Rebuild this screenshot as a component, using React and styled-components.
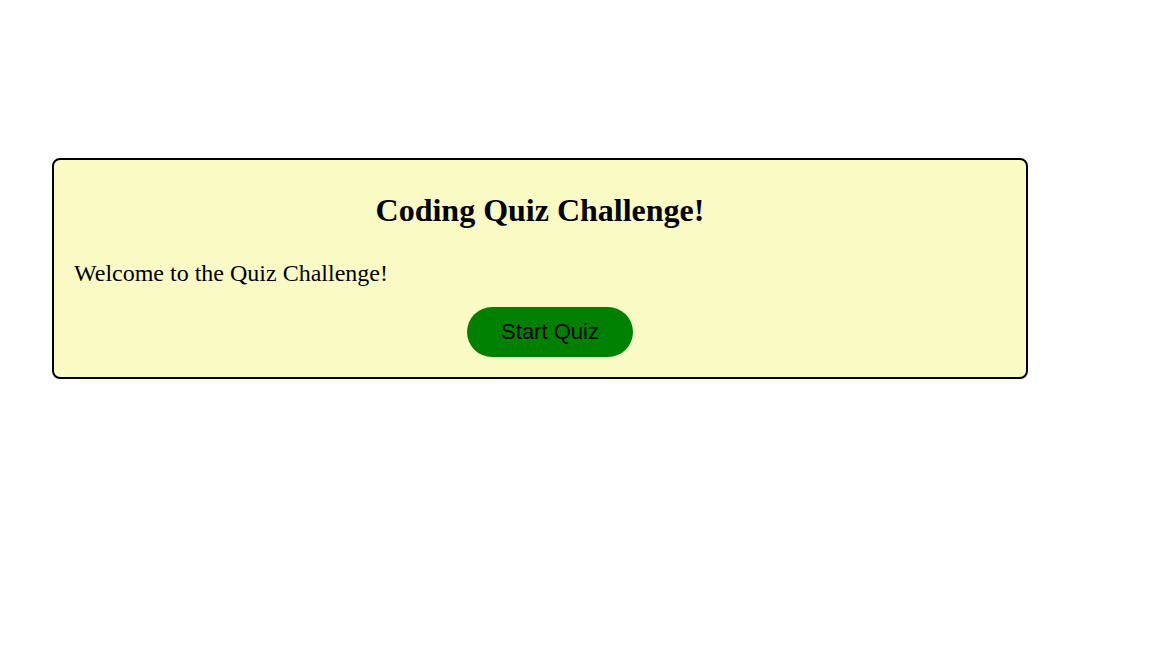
import React from "react";
import styled, { createGlobalStyle } from "styled-components";

const Global = createGlobalStyle`
  body {
    margin: 8px;
    background: #ffffff;
    font-family: "Liberation Serif", "Times New Roman", serif;
  }
`;

const Page = styled.main`
  padding: 150px 0 0 44px;
`;

const Card = styled.section`
  box-sizing: border-box;
  width: 976px;
  border: 2px solid #000;
  border-radius: 8px;
  background: #fafac5;
  padding: 20px;
`;

const Title = styled.h2`
  margin: 12px 0 31px;
  font-size: 32px;
  font-weight: bold;
  text-align: center;
  line-height: 36px;
`;

const Text = styled.p`
  margin: 0;
  font-size: 24px;
  line-height: 28px;
`;

const Actions = styled.div`
  text-align: center;
  margin-top: 20px;
  line-height: 0;
`;

const Button = styled.button`
  margin-left: 20px;
  width: 166px;
  height: 50px;
  padding: 0;
  border: none;
  border-radius: 25px;
  background: #008000;
  color: #000;
  font-family: "Liberation Sans", Arial, sans-serif;
  font-size: 22px;
  line-height: 50px;
  vertical-align: top;
  cursor: pointer;
`;

export default function App() {
  return (
    <>
      <Global />
      <Page>
        <Card>
          <Title>Coding Quiz Challenge!</Title>
          <Text>Welcome to the Quiz Challenge!</Text>
          <Actions>
            <Button>Start Quiz</Button>
          </Actions>
        </Card>
      </Page>
    </>
  );
}
